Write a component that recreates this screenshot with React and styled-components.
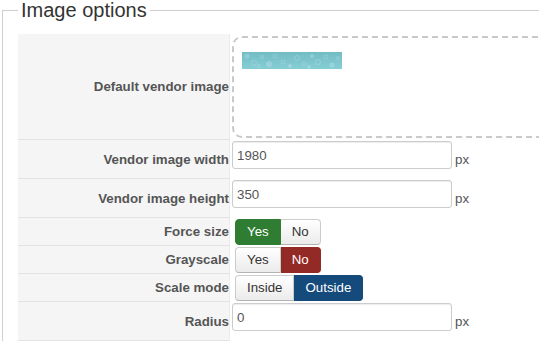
import React from "react";
import styled, { createGlobalStyle, css } from "styled-components";

const Global = createGlobalStyle`
  html, body { margin: 0; padding: 0; overflow: hidden; background: #fff; }
  body { font-family: "Liberation Sans", Arial, Helvetica, sans-serif; }
`;

const Fieldset = styled.fieldset`
  margin: 0 0 0 2px;
  padding: 13px 0 0 15px;
  border: 1px solid #cfcfcf;
  border-right: none;
  border-bottom: none;
  width: 800px;
  min-width: 0;
  box-sizing: border-box;
`;

const Legend = styled.legend`
  font-size: 20px;
  line-height: 21px;
  padding: 0 3px;
  margin: 0;
  color: #333;
  font-weight: normal;
`;

const Table = styled.div`
  display: flex;
  flex-direction: column;
`;

const Row = styled.div`
  display: flex;
  height: ${(p) => p.$h}px;
`;

const Label = styled.div`
  flex: none;
  width: 212px;
  box-sizing: border-box;
  background: #f5f5f5;
  border-bottom: 1px solid #e3e3e3;
  border-right: 1px solid #ececec;
  display: flex;
  align-items: center;
  justify-content: flex-end;
  font-size: 13.3px;
  font-weight: bold;
  color: #555;
  white-space: nowrap;
`;

const Control = styled.div`
  flex: 1;
  display: flex;
  align-items: flex-start;
  padding: ${(p) => p.$pad};
`;

const DropZone = styled.div`
  width: 340px;
  height: 102px;
  box-sizing: border-box;
  border: 2px dashed #c9c9c9;
  border-radius: 10px;
  padding: 14px 8px;
`;

const TextInput = styled.input`
  width: 220px;
  height: 28px;
  box-sizing: border-box;
  border: 1px solid #ccc;
  border-radius: 3px;
  padding: 0 4px;
  margin: 0;
  font-family: inherit;
  font-size: 13.3px;
  color: #555;
  background: #fff;
  box-shadow: inset 0 1px 1px rgba(0, 0, 0, 0.075);
  outline: none;
`;

const Unit = styled.span`
  margin: 11px 0 0 3px;
  font-size: 13.3px;
  line-height: 16px;
  color: #555;
`;

const Group = styled.div`
  display: inline-flex;
`;

const tones = {
  green: "#2f7d32",
  red: "#942a25",
  blue: "#144a7c",
};

const Btn = styled.button`
  height: 26px;
  box-sizing: border-box;
  padding: 0 11px;
  margin: 0;
  font-family: inherit;
  font-size: 13.3px;
  line-height: 24px;
  border: 1px solid;
  cursor: pointer;
  ${(p) =>
    p.$tone
      ? css`
          background: ${tones[p.$tone]};
          border-color: ${tones[p.$tone]};
          color: #fff;
        `
      : css`
          background: linear-gradient(#ffffff, #ebebeb);
          border-color: #cccccc #cccccc #b3b3b3;
          color: #333;
        `}
  &:first-child {
    border-radius: 4px 0 0 4px;
  }
  &:last-child {
    border-radius: 0 4px 4px 0;
  }
  & + & {
    border-left: none;
  }
`;

const bubbles = [
  [5, 4, 2], [12, 11, 2.5], [20, 5, 1.5], [27, 12, 2.5], [33, 4, 2], [41, 10, 2],
  [48, 14, 1.5], [55, 6, 2.5], [62, 12, 2], [70, 4, 1.5], [76, 10, 2.5], [84, 5, 2],
  [90, 13, 2], [96, 6, 1.5], [17, 14, 1.5], [67, 15, 1.5],
];

function VendorImage() {
  return (
    <svg width="100" height="17" viewBox="0 0 100 17">
      <defs>
        <linearGradient id="teal" x1="0" y1="0" x2="0" y2="1">
          <stop offset="0" stopColor="#74bcc4" />
          <stop offset="1" stopColor="#86ced5" />
        </linearGradient>
      </defs>
      <rect width="100" height="17" fill="url(#teal)" />
      {bubbles.map(([x, y, r], i) => (
        <circle
          key={i}
          cx={x}
          cy={y}
          r={r}
          fill={i % 3 === 0 ? "rgba(255,255,255,0.15)" : "none"}
          stroke="rgba(255,255,255,0.25)"
          strokeWidth="0.7"
        />
      ))}
    </svg>
  );
}

function Toggle({ options, value, tone }) {
  return (
    <Group>
      {options.map((o) => (
        <Btn key={o} type="button" $tone={o === value ? tone : undefined}>
          {o}
        </Btn>
      ))}
    </Group>
  );
}

function InputRow({ label, value }) {
  return (
    <Row $h={39}>
      <Label>{label}</Label>
      <Control $pad="1px 0 0 2px">
        <TextInput defaultValue={value} />
        <Unit>px</Unit>
      </Control>
    </Row>
  );
}

function ToggleRow({ label, options, value, tone }) {
  return (
    <Row $h={28}>
      <Label>{label}</Label>
      <Control $pad="1px 0 0 5px">
        <Toggle options={options} value={value} tone={tone} />
      </Control>
    </Row>
  );
}

export default function App() {
  return (
    <>
      <Global />
      <Fieldset>
        <Legend>Image options</Legend>
        <Table>
          <Row $h={106}>
            <Label>Default vendor image</Label>
            <Control $pad="2px 0 0 2px">
              <DropZone>
                <VendorImage />
              </DropZone>
            </Control>
          </Row>
          <InputRow label="Vendor image width" value="1980" />
          <InputRow label="Vendor image height" value="350" />
          <ToggleRow label="Force size" options={["Yes", "No"]} value="Yes" tone="green" />
          <ToggleRow label="Grayscale" options={["Yes", "No"]} value="No" tone="red" />
          <ToggleRow label="Scale mode" options={["Inside", "Outside"]} value="Outside" tone="blue" />
          <InputRow label="Radius" value="0" />
        </Table>
      </Fieldset>
    </>
  );
}
